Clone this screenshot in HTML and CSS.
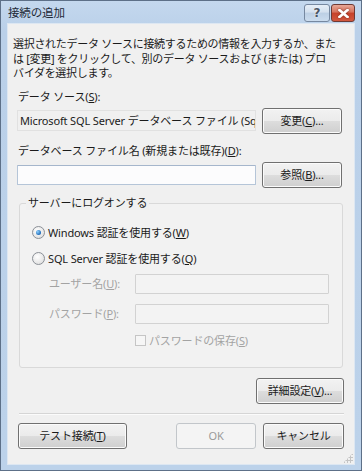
FILE: index.html
```html
<!DOCTYPE html>
<html lang="ja">
<head>
<meta charset="utf-8">
<link rel="stylesheet" href="styles.css">
</head>
<body>
<div class="window">
  <div class="titlebar">
    <span class="title">接続の追加</span>
    <div class="caption-buttons">
      <span class="cap help">?</span>
      <span class="cap close"><svg width="11" height="9" viewBox="0 0 11 9"><path d="M1.5 1 L9.5 8 M9.5 1 L1.5 8" stroke="#fff" stroke-width="2.6" stroke-linecap="square"/></svg></span>
    </div>
  </div>
  <div class="client">
    <p class="intro">選択されたデータ ソースに接続するための情報を入力するか、また<br>は [変更] をクリックして、別のデータ ソースおよび (または) プロ<br>バイダを選択します。</p>

    <div class="field-label">データ ソース(<u>S</u>):</div>
    <div class="row">
      <div class="readonly">Microsoft SQL Server データベース ファイル (SqlClient)</div>
      <button class="btn">変更(<u>C</u>)...</button>
    </div>

    <div class="field-label label-db">データベース ファイル名 (新規または既存)(<u>D</u>):</div>
    <div class="row">
      <div class="textbox"></div>
      <button class="btn">参照(<u>B</u>)...</button>
    </div>

    <div class="group">
      <div class="group-title">サーバーにログオンする</div>
      <div class="radio-row radio-first"><span class="radio checked"></span><span>Windows 認証を使用する(<u>W</u>)</span></div>
      <div class="radio-row"><span class="radio"></span><span>SQL Server 認証を使用する(<u>Q</u>)</span></div>
      <div class="cred-row cred-first"><span class="cred-label">ユーザー名(<u>U</u>):</span><div class="textbox disabled"></div></div>
      <div class="cred-row"><span class="cred-label">パスワード(<u>P</u>):</span><div class="textbox disabled"></div></div>
      <div class="check-row"><span class="checkbox"></span><span>パスワードの保存(<u>S</u>)</span></div>
    </div>

    <div class="advanced-row">
      <button class="btn btn-wide">詳細設定(<u>V</u>)...</button>
    </div>
    <div class="separator"></div>
    <div class="footer">
      <button class="btn btn-test">テスト接続(<u>T</u>)</button>
      <div class="footer-right">
        <button class="btn" disabled>OK</button>
        <button class="btn btn-cancel">キャンセル</button>
      </div>
    </div>
    <div class="grip"></div>
  </div>
</div>
</body>
</html>
```
FILE: styles.css
```css
* { box-sizing: border-box; }
html, body { margin: 0; padding: 0; }
body {
  width: 362px;
  height: 471px;
  overflow: hidden;
  font-family: "Noto Sans", "Noto Sans CJK JP", sans-serif;
  font-size: 11px;
  letter-spacing: -0.15px;
  color: #1b1b1b;
}
u { text-decoration: underline; text-underline-offset: 1px; }

.window {
  width: 362px;
  height: 471px;
  border: 1px solid #5d7088;
  background: linear-gradient(#c4d8ee, #bad0e9 30px, #bcd2ea);
  display: flex;
  flex-direction: column;
  padding: 0 6px 5px 6px;
}
.titlebar {
  height: 22px;
  flex-shrink: 0;
  display: flex;
  align-items: flex-start;
  justify-content: space-between;
}
.title {
  margin-top: 4px;
  margin-left: 1px;
  font-size: 11.5px;
  line-height: 15px;
  color: #1e2a38;
}
.caption-buttons {
  display: flex;
  gap: 1px;
  margin-top: 3px;
}
.cap {
  height: 18px;
  border: 1px solid #7688a0;
  border-radius: 3px;
  display: flex;
  align-items: center;
  justify-content: center;
}
.help {
  width: 26px;
  background: linear-gradient(#e6eef7, #d3e0ee 45%, #bccfe4 50%, #cbdcee);
  color: #4a5564;
  font-family: "DejaVu Sans", sans-serif;
  font-weight: bold;
  font-size: 12px;
  letter-spacing: 0;
  text-shadow: 0 0 2px #fff;
}
.close {
  width: 24px;
  border-color: #6e3a34;
  background: linear-gradient(#e7a796, #d6725d 45%, #c6412a 50%, #d2583f);
}
.close svg { display: block; filter: drop-shadow(0 0 1px #7a2a1c); }

.client {
  flex: 1;
  background: #f0f0f0;
  border: 1px solid #dde7f2;
  padding: 13px 10px 0 5px;
  display: flex;
  flex-direction: column;
  position: relative;
}
.intro {
  margin: 0;
  line-height: 14.5px;
  letter-spacing: -0.3px;
  white-space: nowrap;
}
.field-label {
  margin: 8px 0 0 5px;
  line-height: 15px;
}
.row {
  display: flex;
  align-items: center;
  gap: 6px;
  margin: 4px 0 0 4px;
}
.row + .field-label { margin-top: 9px; }
.readonly {
  width: 239px;
  height: 21px;
  border: 1px solid #e1e1e1;
  background: #f0f0f0;
  padding: 0 2px 0 2px;
  white-space: nowrap;
  overflow: hidden;
  line-height: 19px;
}
.textbox {
  width: 239px;
  height: 20px;
  border: 1px solid #b5c5d8;
  border-top-color: #a5b6cc;
  background: #fcfcfd;
  border-radius: 1px;
}
.textbox.disabled {
  width: 194px;
  border-color: #d2d2d2;
  background: #f3f3f3;
}

.btn {
  font: inherit;
  letter-spacing: inherit;
  color: #1b1b1b;
  width: 80px;
  height: 26px;
  padding: 0;
  border: 1px solid #707070;
  border-radius: 3px;
  background: linear-gradient(#f2f2f2, #ebebeb 50%, #dddddd 50%, #cfcfcf);
  box-shadow: inset 0 0 0 1px #fbfbfb;
  line-height: 22px;
  flex-shrink: 0;
}
.btn:disabled {
  color: #9a9a9a;
  border-color: #c2c6ca;
  background: #f4f4f4;
  box-shadow: none;
}
.btn-wide { width: 88px; }
.btn-test { width: 109px; }
.btn-cancel { width: 81px; }

.group {
  margin: 15px 0 0 6px;
  width: 324px;
  height: 165px;
  flex-shrink: 0;
  border: 1px solid #d9d9d9;
  border-radius: 3px;
  background: #f2f2f2;
  padding: 0 12px 0 12px;
  display: flex;
  flex-direction: column;
}
.group-title {
  margin: -9px 0 0 -6px;
  padding: 0 2px;
  align-self: flex-start;
  background: #f0f0f0;
  line-height: 15px;
}
.radio-row {
  display: flex;
  align-items: center;
  gap: 3px;
  line-height: 15px;
  margin-top: 11px;
}
.radio-first { margin-top: 15px; }
.radio {
  width: 13px;
  height: 13px;
  border-radius: 50%;
  border: 1px solid #8b9097;
  background: radial-gradient(circle at 40% 35%, #ffffff, #e4e4e4 70%, #cfcfcf);
  display: flex;
  align-items: center;
  justify-content: center;
}
.radio.checked::after {
  content: "";
  width: 5px;
  height: 5px;
  border-radius: 50%;
  background: radial-gradient(circle at 35% 35%, #8fd1ff, #1e6bb8 70%, #134a8c);
}
.cred-row {
  display: flex;
  align-items: center;
  color: #a3a3a3;
  margin-top: 8px;
  line-height: 15px;
}
.cred-row + .cred-row { margin-top: 10px; }
.cred-label {
  width: 103px;
  padding-left: 17px;
}
.check-row {
  display: flex;
  align-items: center;
  gap: 3px;
  color: #a3a3a3;
  margin: 9px 0 0 103px;
  line-height: 15px;
}
.checkbox {
  width: 11px;
  height: 11px;
  border: 1px solid #c5c5c5;
  background: #f6f6f6;
}

.advanced-row {
  display: flex;
  justify-content: flex-end;
  margin-top: 10px;
}
.separator {
  margin: 9px 0 0 6px;
  border-top: 1px solid #d5d5d5;
  border-bottom: 1px solid #fbfbfb;
  height: 2px;
  flex-shrink: 0;
}
.footer {
  display: flex;
  justify-content: space-between;
  margin: 8px 0 0 5px;
}
.footer-right { display: flex; gap: 7px; }
.grip {
  position: absolute;
  right: 1px;
  bottom: 1px;
  width: 10px;
  height: 10px;
  background:
    radial-gradient(circle, #c4c4c4 1px, transparent 1.2px) 0 0 / 3px 3px;
  clip-path: polygon(100% 0, 100% 100%, 0 100%);
}
```
